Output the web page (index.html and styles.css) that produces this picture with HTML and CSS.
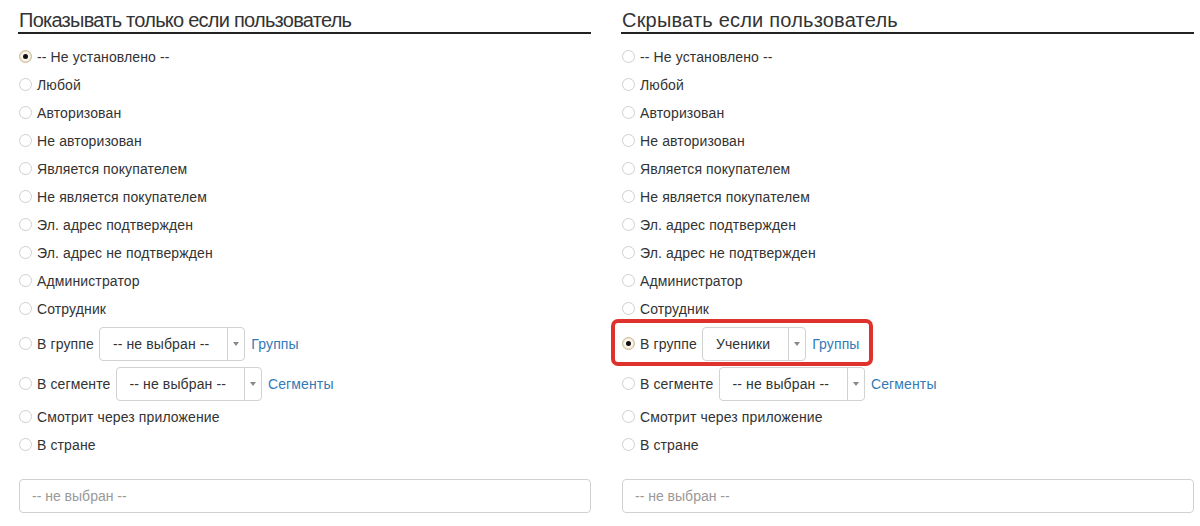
FILE: index.html
```html
<!DOCTYPE html>
<html lang="ru">
<head>
<meta charset="utf-8">
<title>Условия показа</title>
<link rel="stylesheet" href="styles.css">
</head>
<body>
<div class="page">
  <section class="col">
    <h2 class="heading heading-show">Показывать только если пользователь</h2>
    <div class="options">
      <label class="row"><span class="radio checked"></span>-- Не установлено --</label>
      <label class="row"><span class="radio"></span>Любой</label>
      <label class="row"><span class="radio"></span>Авторизован</label>
      <label class="row"><span class="radio"></span>Не авторизован</label>
      <label class="row"><span class="radio"></span>Является покупателем</label>
      <label class="row"><span class="radio"></span>Не является покупателем</label>
      <label class="row"><span class="radio"></span>Эл. адрес подтвержден</label>
      <label class="row"><span class="radio"></span>Эл. адрес не подтвержден</label>
      <label class="row"><span class="radio"></span>Администратор</label>
      <label class="row"><span class="radio"></span>Сотрудник</label>
      <div class="row sel-row"><span class="radio"></span>В группе<span class="select"><span class="select-text">-- не выбран --</span><span class="select-arrow"></span></span><a class="link" href="#">Группы</a></div>
      <div class="row sel-row"><span class="radio"></span>В сегменте<span class="select"><span class="select-text">-- не выбран --</span><span class="select-arrow"></span></span><a class="link" href="#">Сегменты</a></div>
      <label class="row"><span class="radio"></span>Смотрит через приложение</label>
      <label class="row"><span class="radio"></span>В стране</label>
    </div>
    <div class="input">-- не выбран --</div>
  </section>
  <section class="col">
    <h2 class="heading heading-hide">Скрывать если пользователь</h2>
    <div class="options">
      <label class="row"><span class="radio"></span>-- Не установлено --</label>
      <label class="row"><span class="radio"></span>Любой</label>
      <label class="row"><span class="radio"></span>Авторизован</label>
      <label class="row"><span class="radio"></span>Не авторизован</label>
      <label class="row"><span class="radio"></span>Является покупателем</label>
      <label class="row"><span class="radio"></span>Не является покупателем</label>
      <label class="row"><span class="radio"></span>Эл. адрес подтвержден</label>
      <label class="row"><span class="radio"></span>Эл. адрес не подтвержден</label>
      <label class="row"><span class="radio"></span>Администратор</label>
      <label class="row"><span class="radio"></span>Сотрудник</label>
      <div class="row sel-row highlighted"><span class="radio checked"></span>В группе<span class="select"><span class="select-text">Ученики</span><span class="select-arrow"></span></span><a class="link" href="#">Группы</a><span class="mark"></span></div>
      <div class="row sel-row"><span class="radio"></span>В сегменте<span class="select"><span class="select-text">-- не выбран --</span><span class="select-arrow"></span></span><a class="link" href="#">Сегменты</a></div>
      <label class="row"><span class="radio"></span>Смотрит через приложение</label>
      <label class="row"><span class="radio"></span>В стране</label>
    </div>
    <div class="input">-- не выбран --</div>
  </section>
</div>
</body>
</html>
```
FILE: styles.css
```css
* { box-sizing: border-box; }
html, body { margin: 0; background: #fff; }
body {
  font-family: "Liberation Sans", Arial, sans-serif;
  font-size: 14px;
  color: #333;
}
.page {
  display: grid;
  grid-template-columns: 573px 573px;
  column-gap: 30px;
  padding-left: 18px;
}
.heading {
  margin: 0;
  padding: 8px 0 0 1px;
  font-size: 20px;
  line-height: 24px;
  font-weight: normal;
  color: #333;
  border-bottom: 2px solid #222;
  white-space: nowrap;
}
.heading-show { letter-spacing: -0.75px; }
.heading-hide { letter-spacing: 0.2px; }
.options {
  display: flex;
  flex-direction: column;
  align-items: flex-start;
  margin-top: 13px;
  letter-spacing: 0.12px;
}
.row {
  display: flex;
  align-items: center;
  height: 20px;
  margin-bottom: 8px;
  padding-left: 1px;
  line-height: 20px;
  white-space: nowrap;
}
.sel-row {
  height: 34px;
  margin-bottom: 6px;
  position: relative;
}
.radio {
  width: 13px;
  height: 13px;
  border: 1px solid #cfcfcf;
  border-radius: 50%;
  background: #fff;
  margin-right: 5px;
  flex: none;
  position: relative;
  top: -1px;
}
.radio.checked {
  border-color: #c9b89a;
  box-shadow: inset 0 0 0 1px #efe3cc;
  background: #fbf6ee;
}
.radio.checked::after {
  content: "";
  position: absolute;
  left: 3px;
  top: 3px;
  width: 5px;
  height: 5px;
  border-radius: 50%;
  background: #111;
}
.select {
  display: inline-flex;
  align-items: stretch;
  height: 34px;
  margin-left: 5px;
  border: 1px solid #d2d2d2;
  border-radius: 4px;
  background: #fff;
}
.select-text {
  display: flex;
  align-items: center;
  padding: 0 18px 0 13px;
  color: #333;
}
.select-arrow {
  width: 17px;
  border-left: 1px solid #d2d2d2;
  position: relative;
}
.select-arrow::after {
  content: "";
  position: absolute;
  left: 5px;
  top: 14px;
  border-left: 3px solid transparent;
  border-right: 3px solid transparent;
  border-top: 4px solid #888;
}
.link {
  color: #337ab7;
  text-decoration: none;
  margin-left: 6px;
}
.mark {
  position: absolute;
  left: -10px;
  top: -8px;
  width: 262px;
  height: 47px;
  border: 4px solid #e0322c;
  border-radius: 7px;
  pointer-events: none;
}
.input {
  margin-top: 16px;
  margin-left: 1px;
  width: 572px;
  height: 34px;
  border: 1px solid #d0d0d0;
  border-radius: 4px;
  padding: 0 12px;
  display: flex;
  align-items: center;
  color: #999;
}
```
